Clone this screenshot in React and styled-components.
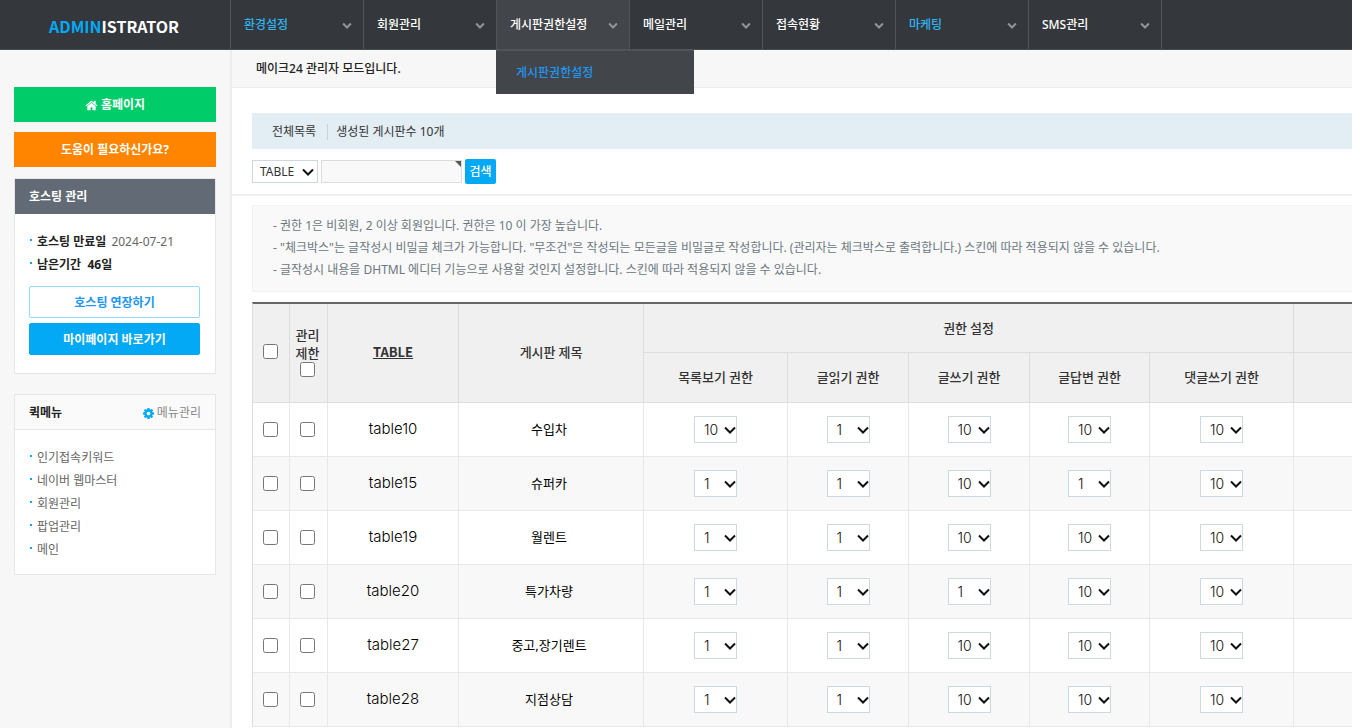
import React from "react";
import styled, { createGlobalStyle } from "styled-components";

const GlobalStyle = createGlobalStyle`
  * { box-sizing: border-box; }
  body {
    margin: 0;
    background: #fff;
    color: #333;
    font-family: "Noto Sans", "Noto Sans CJK KR", sans-serif;
    font-size: 12px;
    line-height: 18px;
  }
  a { color: inherit; text-decoration: none; }
  button, input, select { font-family: inherit; }
  ul { list-style: none; margin: 0; padding: 0; }
`;

const Page = styled.div`
  display: flex;
  flex-direction: column;
  min-height: 100vh;
`;

const Icon = styled.svg`
  flex: none;
  width: ${(p) => p.$size};
  height: ${(p) => p.$size};
  fill: currentColor;
`;

const Header = styled.header`
  display: flex;
  height: 50px;
  background: #34373c;
  border-bottom: 1px solid #46494e;
`;

const Brand = styled.a`
  flex: 0 0 231px;
  display: flex;
  align-items: center;
  justify-content: center;
  padding: 3px 2px 0 0;
  border-right: 1px solid #505357;
  color: #fff;
  font-family: "Noto Sans CJK KR", sans-serif;
  font-size: 16px;
  line-height: 24px;
  font-weight: 700;
`;

const BrandAccent = styled.span`
  color: #03a9f4;
`;

const Nav = styled.nav`
  display: flex;
`;

const NavItem = styled.div`
  position: relative;
  width: 133px;
  height: 49px;
  border-right: 1px solid #505357;
  background: ${(p) => (p.$active ? "#424549" : "transparent")};
`;

const NavLink = styled.a`
  display: flex;
  align-items: center;
  justify-content: space-between;
  height: 100%;
  padding: 0 11px 0 13px;
  color: ${(p) => (p.$accent ? "#2fb4f0" : "#fff")};
  font-weight: 500;

  svg { color: #929497; }
`;

const SubMenu = styled.ul`
  position: absolute;
  z-index: 2;
  top: 49px;
  left: -1px;
  width: 198px;
  padding: 13px 20px 12px;
  background: #424549;
  border-top: 2px solid #505357;
  color: #2196f3;
  font-weight: 500;
`;

const Body = styled.div`
  display: flex;
  flex: 1;
`;

const Sidebar = styled.aside`
  flex: 0 0 232px;
  display: flex;
  flex-direction: column;
  padding: 37px 14px 20px;
  background: #f7f7f7;
  border-right: 2px solid #eee;
`;

const SideButton = styled.button`
  display: flex;
  align-items: center;
  justify-content: center;
  gap: 3px;
  height: ${(p) => (p.$small ? "32px" : "35px")};
  width: 100%;
  margin: 0 0 ${(p) => (p.$small ? "5px" : "10px")};
  padding: 1px 0 0;
  border: 1px solid ${(p) => p.$border || p.$bg};
  border-radius: ${(p) => (p.$small ? "2px" : "0")};
  background: ${(p) => p.$bg};
  color: ${(p) => p.$color || "#fff"};
  font-size: 12px;
  line-height: 18px;
  font-weight: 700;
  cursor: pointer;
`;

const Panel = styled.section`
  margin-top: ${(p) => p.$gap};
  border: 1px solid #e6e6e6;
  background: #fff;
`;

const PanelHead = styled.div`
  display: flex;
  align-items: center;
  justify-content: space-between;
  height: 35px;
  padding: 2px 14px 0;
  background: ${(p) => (p.$dark ? "#626b75" : "#fafafa")};
  color: ${(p) => (p.$dark ? "#fff" : "#222")};
  border-bottom: 1px solid ${(p) => (p.$dark ? "#626b75" : "#e6e6e6")};
`;

const PanelTitle = styled.h2`
  margin: 0;
  font-size: 12px;
  line-height: 18px;
  font-weight: 700;
`;

const ManageLink = styled.a`
  display: flex;
  align-items: center;
  gap: 2px;
  color: #888;

  svg { color: #03a9f4; }
`;

const PanelBody = styled.div`
  padding: 16px 15px 13px 14px;
`;

const BulletList = styled.ul`
  margin-bottom: ${(p) => p.$gap || "0"};
  color: #666;
`;

const Bullet = styled.li`
  display: flex;
  align-items: center;
  gap: 5px;
  line-height: 23px;

  &::before {
    content: "";
    width: 2px;
    height: 2px;
    margin: 0 0 4px 1px;
    background: #03a9f4;
  }
`;

const Strong = styled.strong`
  color: #222;
  font-weight: 700;
`;

const Main = styled.main`
  flex: 1;
  min-width: 0;
`;

const TitleBar = styled.h1`
  margin: 0;
  height: 38px;
  padding: 10px 24px 9px;
  background: #f7f7f7;
  border-bottom: 1px solid #ececec;
  color: #222;
  font-size: 12px;
  line-height: 18px;
  font-weight: 500;
`;

const SearchArea = styled.section`
  padding: 25px 0 10px 20px;
  border-bottom: 2px solid #f0f0f0;
`;

const Summary = styled.div`
  display: flex;
  align-items: center;
  height: 36px;
  padding: 1px 20px 0;
  background: #e2edf4;
`;

const SummaryLink = styled.a`
  padding-right: 11px;
  margin-right: 8px;
  border-right: 1px solid #ccd3d8;
  line-height: 16px;
`;

const SearchForm = styled.form`
  display: flex;
  align-items: center;
  gap: 3px;
  margin-top: 10px;
`;

const SelectWrap = styled.span`
  position: relative;
  display: inline-block;
  vertical-align: top;
  width: ${(p) => p.$w};

  svg {
    position: absolute;
    top: 50%;
    right: ${(p) => p.$inset};
    width: 12px;
    height: 8px;
    margin-top: -4px;
    fill: none;
    stroke: #111;
    stroke-width: 2;
    pointer-events: none;
  }
`;

const BaseSelect = styled.select`
  appearance: none;
  display: block;
  width: 100%;
  border: 1px solid #cdd9df;
  border-radius: 0;
  background: #fff;
`;

const FieldSelect = styled(BaseSelect)`
  height: 23px;
  padding: 0 0 0 7px;
  color: #333;
  font-size: 12px;
`;

const LevelSelect = styled(BaseSelect)`
  height: 27px;
  padding: 0 0 0 9px;
  color: #111;
  font-family: Inter, sans-serif;
  font-size: 14px;
  font-weight: 300;
`;

const SearchBox = styled.label`
  position: relative;
  display: flex;

  &::after {
    content: "";
    position: absolute;
    top: 1px;
    right: 1px;
    border-top: 6px solid #555b4a;
    border-left: 6px solid transparent;
  }
`;

const SearchInput = styled.input`
  width: 141px;
  height: 23px;
  padding: 0 6px;
  border: 1px solid #ddd;
  background: #f9f9f9;
  font-size: 12px;
`;

const SearchButton = styled.button`
  width: 31px;
  height: 25px;
  padding: 0;
  border: 0;
  border-radius: 2px;
  background: #03a9f4;
  color: #fff;
  font-size: 12px;
  line-height: 18px;
  font-weight: 500;
`;

const Content = styled.section`
  padding: 9px 0 0 20px;
`;

const Notes = styled.ul`
  padding: 9px 20px 10px;
  border: 1px solid #f2f2f2;
  border-right: 0;
  background: #f9f9f9;
  color: #6b7780;
  line-height: 22px;
`;

const Table = styled.table`
  width: 100%;
  margin-top: 10px;
  table-layout: fixed;
  border-spacing: 0;
  border-top: 2px solid #666;
  border-left: 1px solid #ddd;
`;

const Col = styled.col`
  width: ${(p) => p.$w};
`;

const HeadRow = styled.tr`
  height: ${(p) => p.$h};
  background: #f0f0f0;
`;

const Th = styled.th`
  padding: 0 0 1px;
  border-right: 1px solid #ddd;
  border-bottom: 1px solid #ddd;
  color: #333;
  font-family: "Noto Sans CJK KR", sans-serif;
  font-size: 13px;
  line-height: 18px;
  font-weight: 500;
`;

const TallTh = styled(Th)`
  padding-bottom: 3px;
`;

const CheckTh = styled(TallTh)`
  padding-right: 2px;
`;

const SortLink = styled.a`
  && { text-decoration: underline; }
  font-weight: 700;
`;

const EndTh = styled.td`
  padding: 0;
  border-bottom: 1px solid #ddd;
`;

const Row = styled.tr`
  height: 54px;

  &:nth-child(even) { background: #f8f8f8; }
`;

const Td = styled.td`
  padding: 0;
  border-right: 1px solid #e8e8e8;
  border-bottom: 1px solid #e8e8e8;
  color: #000;
  font-size: 13px;
  text-align: center;

  &:last-child { border-right: 0; }
`;

const NameTd = styled(Td)`
  padding-bottom: 2px;
  font-family: Inter, sans-serif;
  font-size: 15px;
  font-weight: 300;
`;

const TitleTd = styled(Td)`
  padding-right: 4px;
  padding-bottom: 2px;
`;

const Check = styled.input`
  display: block;
  width: 15px;
  height: 15px;
  margin: 0 auto;
`;

const CheckCell = styled(Td)`
  padding-right: 2px;
`;

const menus = [
  { label: "환경설정", accent: true },
  { label: "회원관리" },
  { label: "게시판권한설정", active: true, sub: ["게시판권한설정"] },
  { label: "메일관리" },
  { label: "접속현황" },
  { label: "마케팅", accent: true },
  { label: "SMS관리" },
];

const quickLinks = ["인기접속키워드", "네이버 웹마스터", "회원관리", "팝업관리", "메인"];

const levelColumns = ["목록보기 권한", "글읽기 권한", "글쓰기 권한", "글답변 권한", "댓글쓰기 권한"];

const columnWidths = ["37px", "38px", "131px", "185px", "144px", "121px", "121px", "120px", "144px", "auto"];

const levelOptions = [1, 2, 3, 4, 5, 6, 7, 8, 9, 10];

const boards = [
  { id: "table10", title: "수입차", levels: [10, 1, 10, 10, 10] },
  { id: "table15", title: "슈퍼카", levels: [1, 1, 10, 1, 10] },
  { id: "table19", title: "월렌트", levels: [1, 1, 10, 10, 10] },
  { id: "table20", title: "특가차량", levels: [1, 1, 1, 10, 10] },
  { id: "table27", title: "중고,장기렌트", levels: [1, 1, 10, 10, 10] },
  { id: "table28", title: "지점상담", levels: [1, 1, 10, 10, 10] },
];

const ChevronIcon = () => (
  <Icon $size="10px" viewBox="0 0 1792 1792" aria-hidden="true">
    <path d="M1683 808l-742 741q-19 19-45 19t-45-19l-742-741q-19-19-19-45.500t19-45.500l166-165q19-19 45-19t45 19l531 531 531-531q19-19 45-19t45 19l166 165q19 19 19 45.500t-19 45.500z" />
  </Icon>
);

const HomeIcon = () => (
  <Icon $size="13px" viewBox="0 0 1792 1792" aria-hidden="true">
    <path d="M1472 992v480q0 26-19 45t-45 19h-384v-384h-256v384h-384q-26 0-45-19t-19-45v-480q0-1 .5-3t.5-3l575-474 575 474q1 2 1 6zm223-69l-62 74q-8 9-21 11h-3q-13 0-21-7l-692-577-692 577q-12 8-24 7-13-2-21-11l-62-74q-8-10-7-23.500t11-21.500l719-599q32-26 76-26t76 26l244 204v-195q0-14 9-23t23-9h192q14 0 23 9t9 23v408l219 182q10 8 11 21.500t-7 23.500z" />
  </Icon>
);

const CogIcon = () => (
  <Icon $size="13px" viewBox="0 0 1792 1792" aria-hidden="true">
    <path d="M1152 896q0-106-75-181t-181-75-181 75-75 181 75 181 181 75 181-75 75-181zm512-109v222q0 12-8 23t-20 13l-185 28q-19 54-39 91 35 50 107 138 10 12 10 25t-9 23q-27 37-99 108t-94 71q-12 0-26-9l-138-108q-44 23-91 38-16 136-29 186-7 28-36 28h-222q-14 0-24.500-8.500t-11.500-21.500l-28-184q-49-16-90-37l-141 107q-10 9-25 9-14 0-25-11-126-114-165-168-7-10-7-23 0-12 8-23 15-21 51-66.500t54-70.500q-27-50-41-99l-183-27q-13-2-21-12.500t-8-23.500v-222q0-12 8-23t19-13l186-28q14-46 39-92-40-57-107-138-10-12-10-24 0-10 9-23 26-36 98.500-107.500t94.500-71.500q13 0 26 10l138 107q44-23 91-38 16-136 29-186 7-28 36-28h222q14 0 24.500 8.500t11.500 21.500l28 184q49 16 90 37l142-107q9-9 24-9 13 0 25 10 129 119 165 170 7 8 7 22 0 12-8 23-15 21-51 66.500t-54 70.500q26 50 41 98l183 28q13 2 21 12.500t8 23.500z" />
  </Icon>
);

const SelectArrow = () => (
  <svg viewBox="0 0 12 8" aria-hidden="true">
    <path d="M1 1.500L6 6.500L11 1.500" />
  </svg>
);

export default function App() {
  return (
    <Page>
      <GlobalStyle />
      <Header>
        <Brand href="#">
          <BrandAccent>ADMIN</BrandAccent>ISTRATOR
        </Brand>
        <Nav>
          {menus.map((m) => (
            <NavItem key={m.label} $active={m.active}>
              <NavLink href="#" $accent={m.accent}>
                {m.label}
                <ChevronIcon />
              </NavLink>
              {m.sub && (
                <SubMenu>
                  {m.sub.map((s) => (
                    <li key={s}><a href="#">{s}</a></li>
                  ))}
                </SubMenu>
              )}
            </NavItem>
          ))}
        </Nav>
      </Header>

      <Body>
        <Sidebar>
          <SideButton $bg="#00cc6a"><HomeIcon />홈페이지</SideButton>
          <SideButton $bg="#ff8400">도움이 필요하신가요?</SideButton>

          <Panel $gap="1px">
            <PanelHead $dark>
              <PanelTitle>호스팅 관리</PanelTitle>
            </PanelHead>
            <PanelBody>
              <BulletList $gap="10px">
                <Bullet><Strong>호스팅 만료일</Strong>2024-07-21</Bullet>
                <Bullet><Strong>남은기간&nbsp; 46일</Strong></Bullet>
              </BulletList>
              <SideButton $small $bg="#fff" $border="#8fdcff" $color="#2196f3">호스팅 연장하기</SideButton>
              <SideButton $small $bg="#03a9f4">마이페이지 바로가기</SideButton>
            </PanelBody>
          </Panel>

          <Panel $gap="20px">
            <PanelHead>
              <PanelTitle>퀵메뉴</PanelTitle>
              <ManageLink href="#"><CogIcon />메뉴관리</ManageLink>
            </PanelHead>
            <PanelBody>
              <BulletList>
                {quickLinks.map((q) => (
                  <Bullet key={q}><a href="#">{q}</a></Bullet>
                ))}
              </BulletList>
            </PanelBody>
          </Panel>
        </Sidebar>

        <Main>
          <TitleBar>메이크24 관리자 모드입니다.</TitleBar>
          <SearchArea>
            <Summary>
              <SummaryLink href="#">전체목록</SummaryLink>
              <span>생성된 게시판수 10개</span>
            </Summary>
            <SearchForm onSubmit={(e) => e.preventDefault()}>
              <SelectWrap $w="66px" $inset="4px">
                <FieldSelect aria-label="검색 항목">
                  <option>TABLE</option>
                </FieldSelect>
                <SelectArrow />
              </SelectWrap>
              <SearchBox>
                <SearchInput type="text" aria-label="검색어" />
              </SearchBox>
              <SearchButton type="submit">검색</SearchButton>
            </SearchForm>
          </SearchArea>

          <Content>
            <Notes>
              <li>- 권한 1은 비회원, 2 이상 회원입니다. 권한은 10 이 가장 높습니다.</li>
              <li>- "체크박스"는 글작성시 비밀글 체크가 가능합니다. "무조건"은 작성되는 모든글을 비밀글로 작성합니다. (관리자는 체크박스로 출력합니다.) 스킨에 따라 적용되지 않을 수 있습니다.</li>
              <li>- 글작성시 내용을 DHTML 에디터 기능으로 사용할 것인지 설정합니다. 스킨에 따라 적용되지 않을 수 있습니다.</li>
            </Notes>

            <Table>
              <colgroup>
                {columnWidths.map((w, i) => <Col key={i} $w={w} />)}
              </colgroup>
              <thead>
                <HeadRow $h="49px">
                  <CheckTh rowSpan={2}><Check type="checkbox" aria-label="전체 선택" /></CheckTh>
                  <CheckTh rowSpan={2}>
                    <label>관리<br />제한<Check type="checkbox" /></label>
                  </CheckTh>
                  <TallTh rowSpan={2}><SortLink href="#">TABLE</SortLink></TallTh>
                  <TallTh rowSpan={2}>게시판 제목</TallTh>
                  <Th colSpan={5}>권한 설정</Th>
                  <EndTh />
                </HeadRow>
                <HeadRow $h="50px">
                  {levelColumns.map((c) => <Th key={c}>{c}</Th>)}
                  <EndTh />
                </HeadRow>
              </thead>
              <tbody>
                {boards.map((b) => (
                  <Row key={b.id}>
                    <CheckCell><Check type="checkbox" aria-label={`${b.id} 선택`} /></CheckCell>
                    <CheckCell><Check type="checkbox" aria-label={`${b.id} 관리 제한`} /></CheckCell>
                    <NameTd>{b.id}</NameTd>
                    <TitleTd>{b.title}</TitleTd>
                    {b.levels.map((level, i) => (
                      <Td key={levelColumns[i]}>
                        <SelectWrap $w="43px" $inset="1px">
                          <LevelSelect defaultValue={level} aria-label={`${b.id} ${levelColumns[i]}`}>
                            {levelOptions.map((o) => <option key={o}>{o}</option>)}
                          </LevelSelect>
                          <SelectArrow />
                        </SelectWrap>
                      </Td>
                    ))}
                    <Td />
                  </Row>
                ))}
              </tbody>
            </Table>
          </Content>
        </Main>
      </Body>
    </Page>
  );
}
